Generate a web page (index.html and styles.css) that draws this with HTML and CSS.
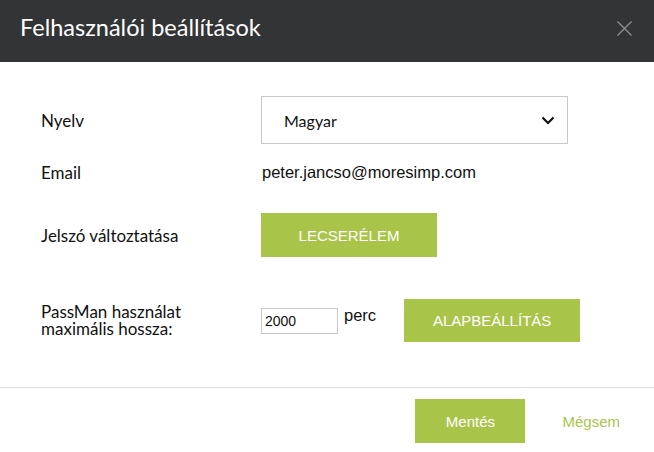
FILE: index.html
```html
<!DOCTYPE html>
<html lang="hu">
<head>
    <meta charset="UTF-8">
    <meta name="viewport" content="width=device-width, initial-scale=1.0">
    <title>Felhasználói beállítások</title>
    <link rel="stylesheet" href="styles.css">
</head>
<body>
    <div class="modal">
        <div class="modal-header">
            <h2>Felhasználói beállítások</h2>
            <button class="close" aria-label="Bezárás">
                <svg width="15" height="15" viewBox="0 0 15 15">
                    <path d="M0.5 0.5L14.5 14.5M14.5 0.5L0.5 14.5" stroke="#8e8f91" stroke-width="1.3" fill="none"/>
                </svg>
            </button>
        </div>

        <div class="modal-body">
            <div class="row row-lang">
                <label class="label" for="language">Nyelv</label>
                <div class="select" id="language">
                    <span>Magyar</span>
                    <svg width="14" height="9" viewBox="0 0 14 9">
                        <path d="M1.5 1.5L7 7L12.5 1.5" stroke="#111" stroke-width="2.2" fill="none"/>
                    </svg>
                </div>
            </div>

            <div class="row row-email">
                <span class="label">Email</span>
                <span class="value">peter.jancso@moresimp.com</span>
            </div>

            <div class="row row-password">
                <span class="label">Jelszó változtatása</span>
                <button class="btn btn-change">LECSERÉLEM</button>
            </div>

            <div class="row row-passman">
                <span class="label label-multi">
                    <span>PassMan használat</span>
                    <span>maximális hossza:</span>
                </span>
                <div class="passman-controls">
                    <input type="text" id="passman-length" value="2000">
                    <span class="unit">perc</span>
                    <button class="btn btn-default">ALAPBEÁLLÍTÁS</button>
                </div>
            </div>
        </div>

        <div class="modal-footer">
            <button class="btn btn-save">Mentés</button>
            <button class="btn-cancel">Mégsem</button>
        </div>
    </div>
</body>
</html>
```

FILE: styles.css
```css
body {
  margin: 0;
  padding: 0;
  background-color: #fff;
  font-family: "Lato", "Liberation Sans", sans-serif;
  color: #111;
}
.modal {
  width: 654px;
  height: 452px;
  background-color: #fff;
}
.modal-header {
  height: 62px;
  box-sizing: border-box;
  background-color: #333436;
  display: flex;
  align-items: flex-start;
  justify-content: space-between;
  padding: 13px 22px 0 20px;
}
.modal-header h2 {
  margin: 0;
  color: #fff;
  font-size: 23.5px;
  font-weight: 400;
}
.close {
  background: none;
  border: none;
  padding: 0;
  margin-top: 8px;
  cursor: pointer;
  display: flex;
}
.modal-body {
  box-sizing: border-box;
  height: 326px;
  padding: 34px 0 0 41px;
  border-bottom: 1px solid #dcdcdc;
}
.row {
  display: flex;
  align-items: center;
}
.label {
  width: 220px;
  font-size: 17px;
}
.select {
  width: 307px;
  height: 48px;
  box-sizing: border-box;
  border: 1px solid #c8c8c8;
  display: flex;
  align-items: center;
  justify-content: space-between;
  padding: 0 12px 0 22px;
  font-size: 16px;
}
.row-email {
  margin-top: 16px;
  height: 24px;
}
.row-email .value {
  font-family: "Liberation Sans", sans-serif;
  font-size: 16.5px;
  margin-left: 1px;
}
.row-password {
  margin-top: 29px;
}
.btn {
  background-color: #a8c54a;
  color: #fff;
  border: none;
  font-family: "Liberation Sans", sans-serif;
  font-size: 15px;
  cursor: pointer;
}
.btn-change {
  width: 176px;
  height: 44px;
}
.row-passman {
  margin-top: 42px;
  align-items: flex-start;
}
.label-multi {
  display: flex;
  flex-direction: column;
  padding-top: 4px;
  line-height: 17px;
}
.label-multi span {
  display: block;
  height: 17px;
}
.passman-controls {
  display: flex;
  align-items: flex-start;
}
.passman-controls input {
  width: 77px;
  height: 26px;
  box-sizing: border-box;
  border: 1px solid #c8c8c8;
  margin: 9px 0 0 0;
  padding: 2px 3px;
  font-family: "Liberation Sans", sans-serif;
  font-size: 14px;
  color: #111;
}
.unit {
  font-family: "Liberation Sans", sans-serif;
  font-size: 16.5px;
  margin: 7px 0 0 6px;
}
.btn-default {
  width: 176px;
  height: 43px;
  margin-left: 28px;
}
.modal-footer {
  display: flex;
  justify-content: flex-end;
  align-items: center;
  padding: 11px 34px 0 0;
}
.btn-save {
  width: 110px;
  height: 44px;
}
.btn-cancel {
  background: none;
  border: none;
  color: #a8c54a;
  font-family: "Liberation Sans", sans-serif;
  font-size: 15px;
  margin-left: 37px;
  padding: 0;
  cursor: pointer;
}
```
